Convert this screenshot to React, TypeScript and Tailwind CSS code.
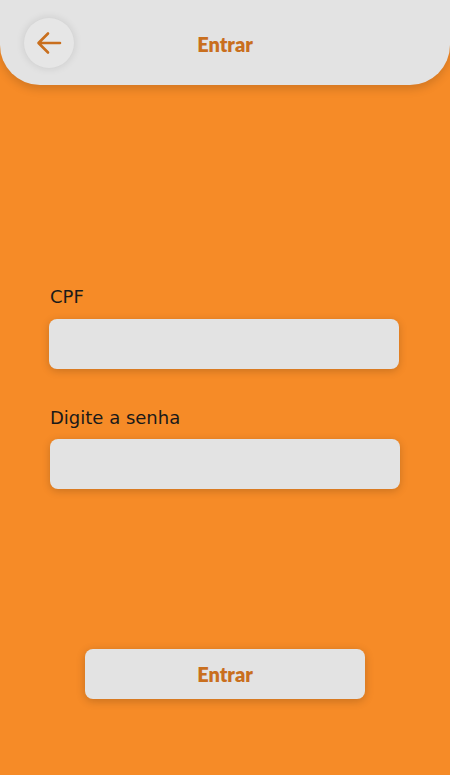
const App = () => {
  return (
    <div className="flex h-[775px] w-[450px] flex-col overflow-hidden bg-[#f68b27]">
      <header className="relative flex h-[85px] items-center justify-center rounded-b-[40px] bg-[#e3e3e3] shadow-[0_4px_10px_rgba(0,0,0,0.15)]">
        <button className="absolute top-[18px] left-[24px] flex h-[50px] w-[50px] items-center justify-center rounded-full bg-[#e6e6e6] shadow-[0_0_8px_rgba(0,0,0,0.12)]">
          <svg
            className="h-[28px] w-[28px]"
            viewBox="0 0 28 28"
            fill="none"
            stroke="#c96f1e"
            strokeWidth="2.6"
            strokeLinecap="round"
            strokeLinejoin="round"
          >
            <path d="M25 14H4M13 4.5L3.5 14l9.5 9.5" />
          </svg>
        </button>
        <h1 className="mt-[3px] font-['Lato','Liberation_Sans',sans-serif] text-[20px] font-extrabold text-[#c96f1e]">
          Entrar
        </h1>
      </header>

      <div className="mt-[200px] flex flex-col px-[49px]">
        <label className="pl-[1px] font-['DejaVu_Sans','Liberation_Sans',sans-serif] text-[18px] leading-[24px] text-[#1a1a1a]">
          CPF
        </label>
        <input className="mt-[10px] h-[50px] w-[350px] rounded-[8px] bg-[#e3e3e3] shadow-[0_2px_8px_rgba(0,0,0,0.18)] outline-none" />

        <label className="mt-[37px] pl-[1px] font-['DejaVu_Sans','Liberation_Sans',sans-serif] text-[18px] leading-[24px] text-[#1a1a1a]">
          Digite a senha
        </label>
        <input
          type="password"
          className="mt-[9px] ml-[1px] h-[50px] w-[350px] rounded-[8px] bg-[#e3e3e3] shadow-[0_2px_8px_rgba(0,0,0,0.18)] outline-none"
        />
      </div>

      <div className="mt-[160px] flex justify-center">
        <button className="h-[50px] w-[280px] rounded-[8px] bg-[#e3e3e3] font-['Lato','Liberation_Sans',sans-serif] text-[20px] font-extrabold text-[#c96f1e] shadow-[0_2px_10px_rgba(0,0,0,0.2)]">
          Entrar
        </button>
      </div>
    </div>
  );
};

export default App;
